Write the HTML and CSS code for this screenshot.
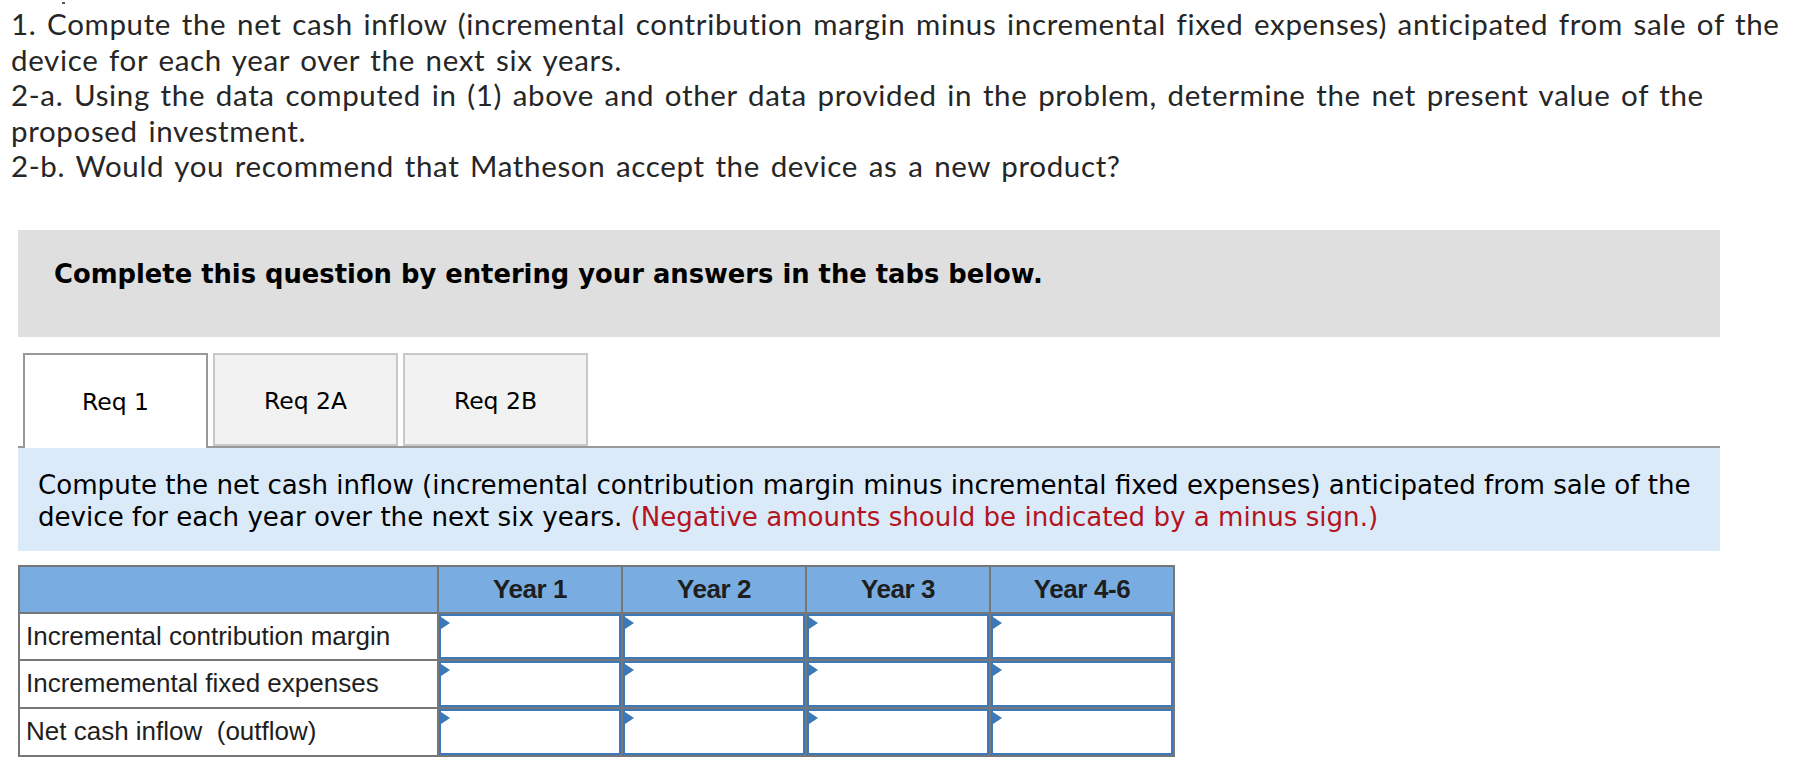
FILE: index.html
```html
<!DOCTYPE html>
<html lang="en">
<head>
<meta charset="utf-8">
<title>Req 1</title>
<link rel="stylesheet" href="styles.css">
</head>
<body>
<div class="question">
  <p>1. Compute the net cash inflow (incremental contribution margin minus incremental fixed expenses) anticipated from sale of the device for each year over the next six years.</p>
  <p>2-a. Using the data computed in (1) above and other data provided in the problem, determine the net present value of the proposed investment.</p>
  <p>2-b. Would you recommend that Matheson accept the device as a new product?</p>
</div>

<div class="banner">Complete this question by entering your answers in the tabs below.</div>

<div class="tabs">
  <div class="tab active">Req 1</div>
  <div class="tab">Req 2A</div>
  <div class="tab">Req 2B</div>
</div>

<div class="instructions">Compute the net cash inflow (incremental contribution margin minus incremental fixed expenses) anticipated from sale of the device for each year over the next six years. <span class="note">(Negative amounts should be indicated by a minus sign.)</span></div>

<table class="grid">
  <colgroup>
    <col class="c-label">
    <col class="c-year">
    <col class="c-year">
    <col class="c-year">
    <col class="c-year">
  </colgroup>
  <tr class="r-head">
    <th></th>
    <th>Year 1</th>
    <th>Year 2</th>
    <th>Year 3</th>
    <th>Year 4-6</th>
  </tr>
  <tr class="r-a">
    <td class="label">Incremental contribution margin</td>
    <td class="cell"></td>
    <td class="cell"></td>
    <td class="cell"></td>
    <td class="cell"></td>
  </tr>
  <tr class="r-b">
    <td class="label">Incrememental fixed expenses</td>
    <td class="cell"></td>
    <td class="cell"></td>
    <td class="cell"></td>
    <td class="cell"></td>
  </tr>
  <tr class="r-b">
    <td class="label">Net cash inflow&nbsp; (outflow)</td>
    <td class="cell"></td>
    <td class="cell"></td>
    <td class="cell"></td>
    <td class="cell"></td>
  </tr>
</table>
</body>
</html>
```

FILE: styles.css
```css
html, body {
  margin: 0;
  padding: 0;
  background: #ffffff;
}

body {
  font-family: "DejaVu Sans", Verdana, sans-serif;
  color: #000;
}

.question {
  position: relative;
  padding: 6px 0 0 11px;
  font-family: Lato, "Open Sans", sans-serif;
  font-size: 29.5px;
  line-height: 35.5px;
  letter-spacing: 0.65px;
  word-spacing: 2.5px;
  color: #262626;
}

.question::before {
  content: "";
  position: absolute;
  left: 62px;
  top: 2px;
  width: 3px;
  height: 2px;
  background: #555;
}

.question p {
  margin: 0;
}

.banner {
  margin: 46px 0 0 18px;
  width: 1702px;
  height: 107px;
  box-sizing: border-box;
  background: #dfdfdf;
  padding: 29px 0 0 36px;
  font-weight: bold;
  font-size: 25.8px;
  line-height: 30px;
  color: #000;
}

.tabs {
  display: flex;
  gap: 5px;
  margin: 16px 0 0 18px;
  width: 1702px;
  height: 95px;
  box-sizing: border-box;
  padding-left: 5px;
  border-bottom: 2px solid #999;
}

.tab {
  width: 185px;
  height: 93px;
  box-sizing: border-box;
  border: 2px solid #c8c8c8;
  background: #f2f2f2;
  display: flex;
  align-items: center;
  justify-content: center;
  padding-top: 4px;
  font-size: 23.5px;
  color: #000;
}

.tab.active {
  background: #fff;
  border-color: #999;
  border-bottom: none;
  height: 95px;
  margin-bottom: -2px;
  padding-top: 2px;
}

.instructions {
  margin-left: 18px;
  width: 1702px;
  box-sizing: border-box;
  background: #dbeaf8;
  padding: 21px 10px 18px 20px;
  font-size: 26.1px;
  line-height: 32px;
  color: #000;
}

.note {
  color: #b3141e;
}

.grid {
  margin: 14px 0 0 18px;
  border-collapse: separate;
  border-spacing: 2px;
  background: #777;
  table-layout: fixed;
  width: 1157px;
  font-family: "Liberation Sans", Arial, sans-serif;
  color: #1e1e1e;
}

.c-label { width: 417px; }
.c-year { width: 182px; }

.r-head, .r-a { height: 45px; }
.r-b { height: 46px; }

.grid th,
.grid td {
  padding: 0;
}

.grid th {
  background: #79ade1;
  font-weight: bold;
  font-size: 26px;
  letter-spacing: -0.4px;
  text-align: center;
  vertical-align: middle;
}

.grid td.label {
  background: #fff;
  font-size: 26px;
  padding-left: 6px;
  text-align: left;
  vertical-align: middle;
  white-space: nowrap;
}

.grid td.cell {
  position: relative;
  background: #fff;
  border: 2px solid #3d78b8;
}

.grid td.cell::before {
  content: "";
  position: absolute;
  left: 0;
  top: 1px;
  border-left: 9px solid #3d78b8;
  border-top: 6.5px solid transparent;
  border-bottom: 6.5px solid transparent;
}
```
